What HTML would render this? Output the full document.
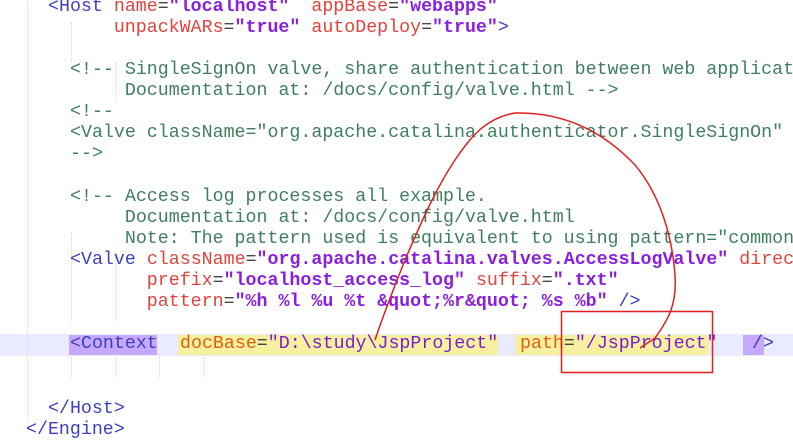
<!DOCTYPE html>
<html><head><meta charset="utf-8"><style>
html,body{margin:0;padding:0;width:793px;height:442px;overflow:hidden;background:#fff;}
#w{position:absolute;left:0;top:0;width:793px;height:442px;overflow:hidden;}
#s{position:absolute;left:0;top:2px;width:793px;height:442px;}
.l{position:absolute;white-space:pre;font-family:"Liberation Mono","Courier New",monospace;font-size:18.3px;line-height:21px;height:21px;}
.t{color:#3f3fbf}.a{color:#e0443c}.v{color:#8a1fe0;font-weight:bold}.c{color:#3f7f5f}.e{color:#444}
.g{position:absolute;width:0;border-left:1px dotted #d8d8d8;}
.an{color:#e06010}
</style></head><body><div id="w"><div id="s">
<div style="position:absolute;left:0;top:332px;width:793px;height:22px;background:#ebebff"></div>
<div class="g" style="left:27px;top:0;height:420px"></div>
<div class="g" style="left:71px;top:20px;height:40px"></div>
<div class="g" style="left:115px;top:60px;height:40px"></div>
<div class="g" style="left:71px;top:230px;height:90px"></div>
<div class="g" style="left:115px;top:250px;height:70px"></div>
<div class="g" style="left:71px;top:355px;height:20px"></div>
<div class="g" style="left:115px;top:355px;height:20px"></div>
<div class="g" style="left:159px;top:355px;height:20px"></div>
<div class="g" style="left:203px;top:355px;height:20px"></div>

<div class="l" style="left:48px;top:-5px"><span class="t">&lt;Host</span> <span class="a">name</span><span class="e">=</span><span class="v">"localhost"</span>  <span class="a">appBase</span><span class="e">=</span><span class="v">"webapps"</span></div>
<div class="l" style="left:48px;top:16px">      <span class="a">unpackWARs</span><span class="e">=</span><span class="v">"true"</span> <span class="a">autoDeploy</span><span class="e">=</span><span class="v">"true"</span><span class="t">&gt;</span></div>
<div class="l c" style="left:70px;top:58px">&lt;!-- SingleSignOn valve, share authentication between web applications</div>
<div class="l c" style="left:70px;top:79px">     Documentation at: /docs/config/valve.html --&gt;</div>
<div class="l c" style="left:70px;top:100px">&lt;!--</div>
<div class="l c" style="left:70px;top:121px">&lt;Valve className="org.apache.catalina.authenticator.SingleSignOn" /&gt;</div>
<div class="l c" style="left:70px;top:142px">--&gt;</div>
<div class="l c" style="left:70px;top:185px">&lt;!-- Access log processes all example.</div>
<div class="l c" style="left:70px;top:206px">     Documentation at: /docs/config/valve.html</div>
<div class="l c" style="left:70px;top:227px">     Note: The pattern used is equivalent to using pattern="common" --&gt;</div>
<div class="l" style="left:70px;top:248px"><span class="t">&lt;Valve</span> <span class="a">className</span><span class="e">=</span><span class="v">"org.apache.catalina.valves.AccessLogValve"</span> <span class="a">directory</span></div>
<div class="l" style="left:70px;top:269px">       <span class="a">prefix</span><span class="e">=</span><span class="v">"localhost_access_log"</span> <span class="a">suffix</span><span class="e">=</span><span class="v">".txt"</span></div>
<div class="l" style="left:70px;top:290px">       <span class="a">pattern</span><span class="e">=</span><span class="v">"%h %l %u %t &amp;quot;%r&amp;quot; %s %b"</span> <span class="t">/&gt;</span></div>

<div style="position:absolute;left:69px;top:333px;width:88px;height:20px;background:#c7a8ff"></div>
<div style="position:absolute;left:178px;top:333px;width:320px;height:20px;background:#f6f0a0"></div>
<div style="position:absolute;left:515px;top:333px;width:194px;height:20px;background:#f6f0a0"></div>
<div style="position:absolute;left:743px;top:333px;width:21px;height:20px;background:#c7a8ff"></div>
<div class="l" style="left:70px;top:332px"><span class="t">&lt;Context</span></div>
<div class="l" style="left:180px;top:332px"><span class="an">docBase</span><span class="e">=</span><span class="v" style="font-weight:normal;color:#7a1fd0">"D:\study\JspProject"</span></div>
<div class="l" style="left:520px;top:332px"><span class="an">path</span><span class="e">=</span><span class="v" style="font-weight:normal;color:#7a1fd0">"/JspProject"</span></div>
<div class="l" style="left:752px;top:332px"><span class="t">/&gt;</span></div>

<div class="l t" style="left:48px;top:397px">&lt;/Host&gt;</div>
<div class="l t" style="left:26px;top:418px">&lt;/Engine&gt;</div>
</div>
<svg style="position:absolute;left:0;top:0" width="793" height="442">
<rect x="561.5" y="311.5" width="151" height="61" fill="none" stroke="#e02020" stroke-width="1.5"/>
<path d="M375,340 C385,310 395,285 405,260 C420,225 435,190 455,160 C470,138 485,118 515,113 C560,112 600,128 635,165 C660,195 672,235 675,275 C677,305 668,320 655,338 L640,348" fill="none" stroke="#e02020" stroke-width="1.5"/>
</svg>
</div></body></html>
